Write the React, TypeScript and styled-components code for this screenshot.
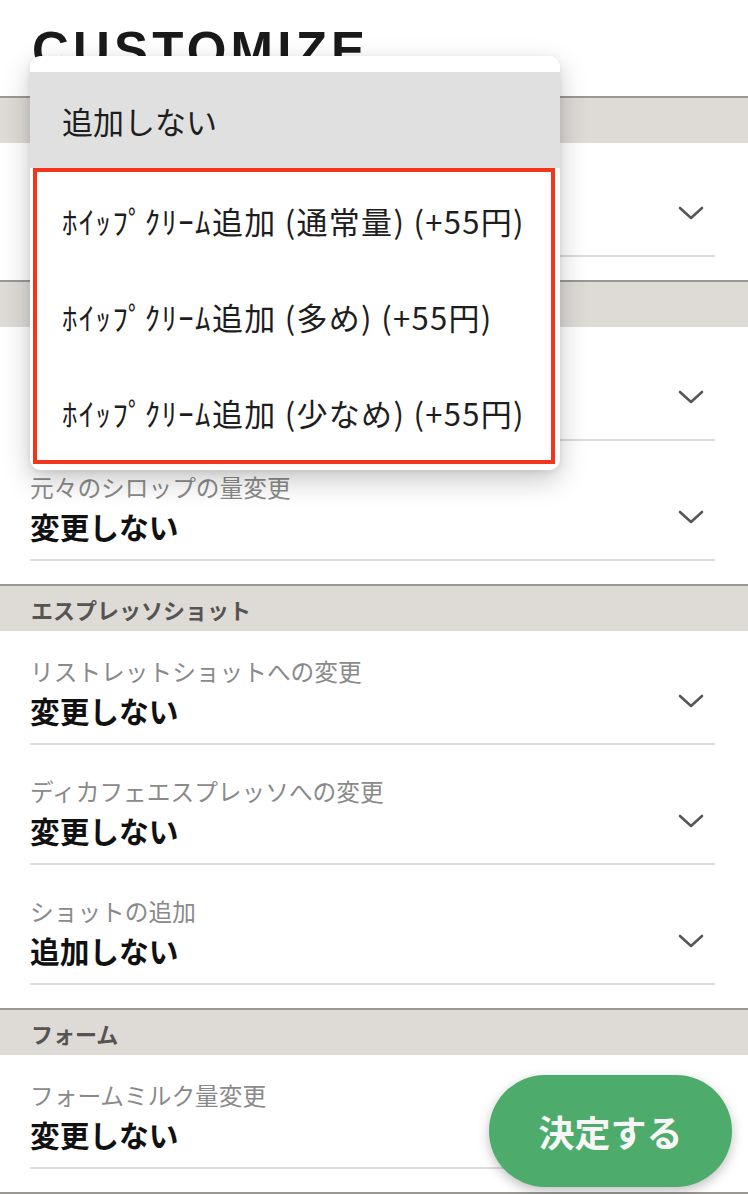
import React from "react";
import styled, { createGlobalStyle } from "styled-components";

const GlobalStyle = createGlobalStyle`
  html, body { margin: 0; padding: 0; background: #fff; }
  body {
    font-family: "Noto Sans CJK JP", "Noto Sans", sans-serif;
    color: #111;
    overflow: hidden;
  }
  * { box-sizing: border-box; }
`;

const Page = styled.div`
  position: relative;
  width: 748px;
  height: 1194px;
  overflow: hidden;
  background: #fff;
`;

const TitleBar = styled.header`
  height: 96px;
  padding: 25px 0 0 32px;
`;

const Title = styled.h1`
  margin: 0;
  font-family: "Liberation Sans", Arial, sans-serif;
  font-weight: 700;
  font-size: 51px;
  line-height: 1;
  letter-spacing: 4.2px;
  color: #1a1a1a;
`;

const Section = styled.section`
  display: flex;
  flex-direction: column;
`;

const SectionHeader = styled.h2`
  margin: 0;
  height: 47px;
  border-top: 2px solid #9b9894;
  background: #dedbd7;
  display: flex;
  align-items: center;
  padding-left: 31px;
  font-size: 22px;
  font-weight: 700;
  color: #565452;
`;

const NextSectionEdge = styled.div`
  height: 47px;
  border-top: 2px solid #9b9894;
  background: #dedbd7;
`;

const RowList = styled.div`
  display: flex;
  flex-direction: column;
  padding: 0 33px 23px 30px;
`;

const Row = styled.div`
  display: flex;
  align-items: center;
  padding: 24px 0 12px 0;
  border-bottom: 2px solid #dcdcdc;
  & + & {
    padding-top: 30px;
  }
`;

const RowText = styled.div`
  flex: 1;
  display: flex;
  flex-direction: column;
  gap: 4px;
`;

const Label = styled.div`
  font-size: 23.7px;
  line-height: 32px;
  color: #8a8a8a;
`;

const Value = styled.div`
  font-size: 29.7px;
  line-height: 40px;
  font-weight: 700;
  color: #111;
`;

const Chevron = styled.svg`
  width: 26px;
  height: 16px;
  margin: 16px 11px 0 0;
  flex-shrink: 0;
`;

const Dropdown = styled.div`
  position: absolute;
  left: 30px;
  top: 56px;
  width: 530px;
  padding: 16px 0 6px 0;
  background: #fff;
  border-radius: 11px;
  box-shadow: 0 10px 28px rgba(0, 0, 0, 0.22), 0 2px 6px rgba(0, 0, 0, 0.08);
`;

const Option = styled.div<{ $selected?: boolean }>`
  height: 96px;
  display: flex;
  align-items: center;
  padding-left: ${(p) => (p.$selected ? "32px" : "25px")};
  background: ${(p) => (p.$selected ? "#e0e0e0" : "transparent")};
  font-size: 31px;
  letter-spacing: ${(p) => (p.$selected ? "0" : "1.3px")};
  color: #1e1e1e;
  white-space: nowrap;
`;

const Highlight = styled.div`
  margin: 0 5px 0 3px;
  border: 4px solid #f1361c;
`;

const SubmitButton = styled.button`
  position: absolute;
  right: 16px;
  bottom: 7px;
  width: 243px;
  height: 112px;
  border: none;
  border-radius: 56px;
  background: #4dab6c;
  color: #f6f6f6;
  font-family: "Noto Sans CJK JP", sans-serif;
  font-size: 36px;
  font-weight: 700;
  box-shadow: 0 4px 12px rgba(0, 0, 0, 0.25);
  padding: 0;
`;

const ChevronIcon = () => (
  <Chevron viewBox="0 0 26 16" fill="none">
    <path d="M2 3 L13 13 L24 3" stroke="#575757" strokeWidth="2.6" strokeLinecap="round" strokeLinejoin="round" />
  </Chevron>
);

type Item = { label: string; value: string };
type Group = { title: string; items: Item[] };

const groups: Group[] = [
  { title: "ホイップクリーム", items: [{ label: "ホイップクリームの追加", value: "追加しない" }] },
  {
    title: "シロップ",
    items: [
      { label: "シロップの追加", value: "追加しない" },
      { label: "元々のシロップの量変更", value: "変更しない" },
    ],
  },
  {
    title: "エスプレッソショット",
    items: [
      { label: "リストレットショットへの変更", value: "変更しない" },
      { label: "ディカフェエスプレッソへの変更", value: "変更しない" },
      { label: "ショットの追加", value: "追加しない" },
    ],
  },
  { title: "フォーム", items: [{ label: "フォームミルク量変更", value: "変更しない" }] },
];

const options = [
  "ﾎｲｯﾌﾟｸﾘｰﾑ追加 (通常量) (+55円)",
  "ﾎｲｯﾌﾟｸﾘｰﾑ追加 (多め) (+55円)",
  "ﾎｲｯﾌﾟｸﾘｰﾑ追加 (少なめ) (+55円)",
];

export default function App() {
  return (
    <Page>
      <GlobalStyle />
      <TitleBar>
        <Title>CUSTOMIZE</Title>
      </TitleBar>
      {groups.map((g) => (
        <Section key={g.title}>
          <SectionHeader>{g.title}</SectionHeader>
          <RowList>
            {g.items.map((it) => (
              <Row key={it.label}>
                <RowText>
                  <Label>{it.label}</Label>
                  <Value>{it.value}</Value>
                </RowText>
                <ChevronIcon />
              </Row>
            ))}
          </RowList>
        </Section>
      ))}
      <NextSectionEdge />
      <Dropdown>
        <Option $selected>追加しない</Option>
        <Highlight>
          {options.map((o) => (
            <Option key={o}>{o}</Option>
          ))}
        </Highlight>
      </Dropdown>
      <SubmitButton>決定する</SubmitButton>
    </Page>
  );
}
